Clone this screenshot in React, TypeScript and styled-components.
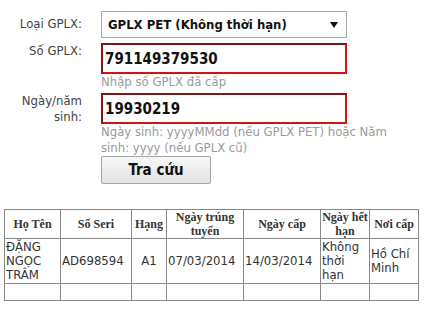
import React from "react";
import styled, { createGlobalStyle } from "styled-components";

const Global = createGlobalStyle`
  html, body { margin: 0; padding: 0; background: #fff; }
  body {
    font-family: "DejaVu Sans Condensed", "DejaVu Sans", "Liberation Sans", sans-serif;
    font-stretch: semi-condensed;
    font-size: 13px;
    color: #333;
  }
`;

const Page = styled.div`
  padding: 11px 0 0 4px;
  width: 423px;
  box-sizing: border-box;
`;

const Form = styled.div`
  display: flex;
  flex-direction: column;
  margin-left: -4px;
`;

const Row = styled.div<{ $gap?: number }>`
  display: grid;
  grid-template-columns: 82px 320px;
  column-gap: 19px;
  margin-bottom: ${(p) => p.$gap ?? 0}px;
`;

const Label = styled.div<{ $pt?: number }>`
  justify-self: end;
  width: 66px;
  text-align: right;
  line-height: 16px;
  padding-top: ${(p) => p.$pt ?? 0}px;
  color: #444;
`;

const Field = styled.div`
  display: flex;
  flex-direction: column;
  align-items: flex-start;
`;

const SelectBox = styled.div`
  box-sizing: border-box;
  width: 246px;
  height: 27px;
  border: 1px solid #a9a9a9;
  background: #fff;
  display: flex;
  align-items: center;
  justify-content: space-between;
  padding: 0 8px 0 6px;
  font-weight: bold;
  color: #111;
`;

const TextInput = styled.div`
  box-sizing: border-box;
  width: 246px;
  height: 31px;
  border-style: solid;
  border-width: 2px;
  border-color: #7d1616 #d01414 #d01414 #7d1616;
  background: #fff;
  display: flex;
  align-items: center;
  padding-left: 2px;
  font-size: 15px;
  font-weight: bold;
  color: #111;
`;

const Hint = styled.div`
  color: #9a9a9a;
  line-height: 16px;
  width: 300px;
`;

const Button = styled.button`
  box-sizing: border-box;
  width: 110px;
  height: 28px;
  margin-top: 0;
  border: 1px solid #a6a6a6;
  border-radius: 2px;
  background: linear-gradient(#f7f7f7, #e3e3e3);
  font-family: inherit;
  font-stretch: semi-condensed;
  font-size: 15px;
  font-weight: bold;
  color: #111;
  padding: 0;
`;

const Table = styled.table`
  margin-top: 25px;
  width: 414px;
  table-layout: fixed;
  border-collapse: collapse;
  border: 1px solid #888;
`;

const Th = styled.th`
  border: 1px solid #888;
  padding: 0 1px;
  font-family: "Liberation Serif", serif;
  font-size: 12px;
  font-weight: bold;
  line-height: 14px;
  text-align: center;
  vertical-align: middle;
  color: #333;
`;

const Td = styled.td<{ $center?: boolean }>`
  border: 1px solid #888;
  padding: 1px;
  line-height: 14px;
  vertical-align: middle;
  text-align: ${(p) => (p.$center ? "center" : "left")};
  color: #333;
`;

const Arrow = () => (
  <svg width="8" height="6" viewBox="0 0 8 6">
    <polygon points="0,0 8,0 4,6" fill="#111" />
  </svg>
);

const cols = [56, 71, 35, 77, 77, 49, 49];

export default function App() {
  return (
    <Page>
      <Global />
      <Form>
        <Row $gap={5}>
          <Label $pt={5}>Loại GPLX:</Label>
          <Field>
            <SelectBox>
              <span>GPLX PET (Không thời hạn)</span>
              <Arrow />
            </SelectBox>
          </Field>
        </Row>
        <Row $gap={3}>
          <Label>Số GPLX:</Label>
          <Field>
            <TextInput>791149379530</TextInput>
            <Hint>Nhập số GPLX đã cấp</Hint>
          </Field>
        </Row>
        <Row>
          <Label>Ngày/năm sinh:</Label>
          <Field>
            <TextInput>19930219</TextInput>
            <Hint>Ngày sinh: yyyyMMdd (nếu GPLX PET) hoặc Năm sinh: yyyy (nếu GPLX cũ)</Hint>
            <Button>Tra cứu</Button>
          </Field>
        </Row>
      </Form>
      <Table>
        <colgroup>
          {cols.map((w, i) => (
            <col key={i} style={{ width: w }} />
          ))}
        </colgroup>
        <thead>
          <tr>
            <Th>Họ Tên</Th>
            <Th>Số Seri</Th>
            <Th>Hạng</Th>
            <Th>Ngày trúng tuyển</Th>
            <Th>Ngày cấp</Th>
            <Th>Ngày hết hạn</Th>
            <Th>Nơi cấp</Th>
          </tr>
        </thead>
        <tbody>
          <tr>
            <Td>ĐẶNG NGỌC TRÂM</Td>
            <Td>AD698594</Td>
            <Td $center>A1</Td>
            <Td>07/03/2014</Td>
            <Td>14/03/2014</Td>
            <Td>Không thời hạn</Td>
            <Td>Hồ Chí Minh</Td>
          </tr>
          <tr>
            {cols.map((_, i) => (
              <Td key={i}>&nbsp;</Td>
            ))}
          </tr>
        </tbody>
      </Table>
    </Page>
  );
}
